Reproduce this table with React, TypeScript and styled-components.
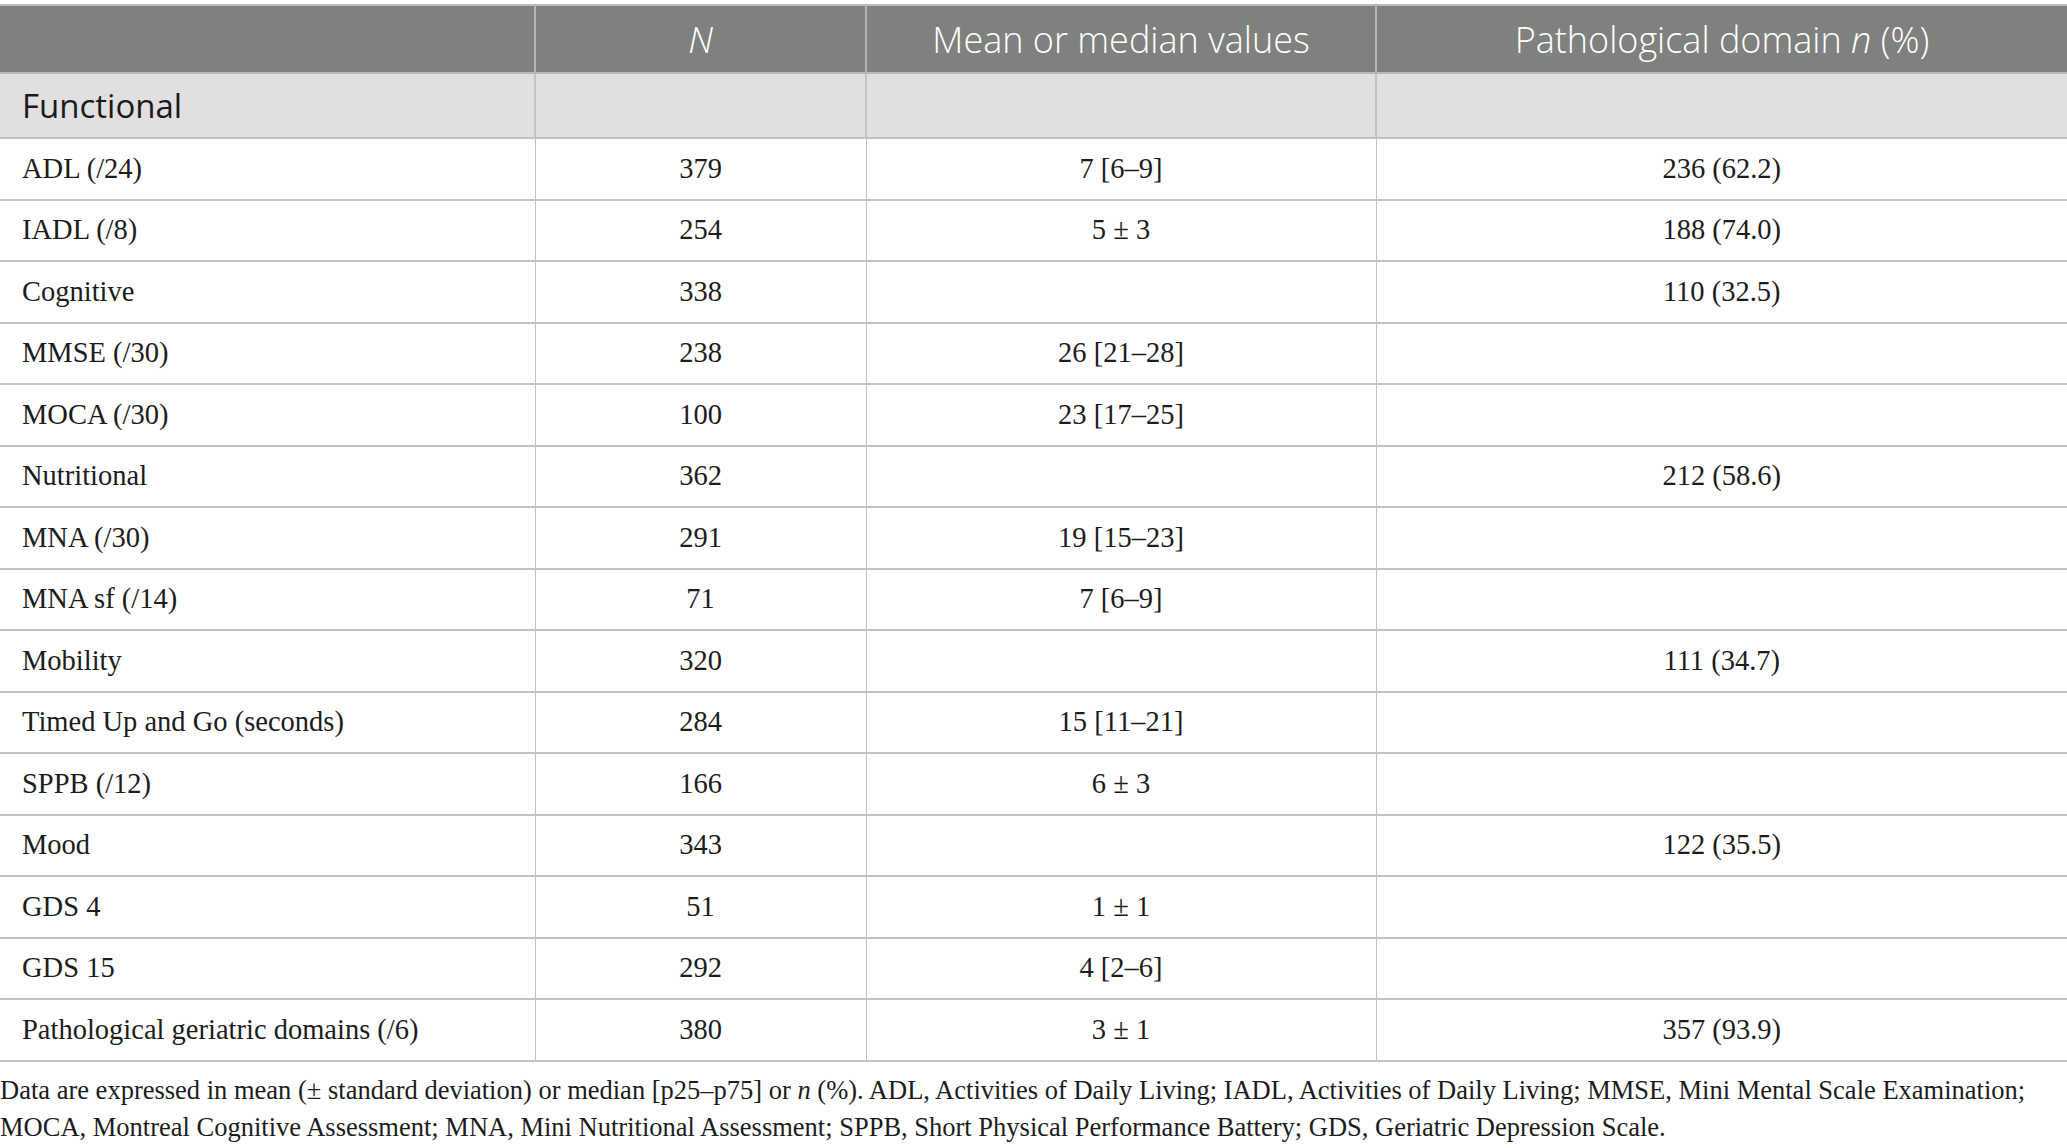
import styled, { createGlobalStyle } from 'styled-components'

type Row = {
  label: string
  n: string
  value?: string
  pathological?: string
}

const rows: Row[] = [
  { label: 'ADL (/24)', n: '379', value: '7 [6–9]', pathological: '236 (62.2)' },
  { label: 'IADL (/8)', n: '254', value: '5 ± 3', pathological: '188 (74.0)' },
  { label: 'Cognitive', n: '338', pathological: '110 (32.5)' },
  { label: 'MMSE (/30)', n: '238', value: '26 [21–28]' },
  { label: 'MOCA (/30)', n: '100', value: '23 [17–25]' },
  { label: 'Nutritional', n: '362', pathological: '212 (58.6)' },
  { label: 'MNA (/30)', n: '291', value: '19 [15–23]' },
  { label: 'MNA sf (/14)', n: '71', value: '7 [6–9]' },
  { label: 'Mobility', n: '320', pathological: '111 (34.7)' },
  { label: 'Timed Up and Go (seconds)', n: '284', value: '15 [11–21]' },
  { label: 'SPPB (/12)', n: '166', value: '6 ± 3' },
  { label: 'Mood', n: '343', pathological: '122 (35.5)' },
  { label: 'GDS 4', n: '51', value: '1 ± 1' },
  { label: 'GDS 15', n: '292', value: '4 [2–6]' },
  { label: 'Pathological geriatric domains (/6)', n: '380', value: '3 ± 1', pathological: '357 (93.9)' },
]

const GlobalStyle = createGlobalStyle`
  html, body {
    margin: 0;
    padding: 0;
    background: #ffffff;
  }
`

export default function App() {
  return (
    <Page>
      <GlobalStyle />
      <Table>
        <colgroup>
          <col style={{ width: 535 }} />
          <col style={{ width: 331 }} />
          <col style={{ width: 510 }} />
          <col />
        </colgroup>
        <thead>
          <tr>
            <HeadCell />
            <HeadCell>
              <i>N</i>
            </HeadCell>
            <HeadCell>Mean or median values</HeadCell>
            <HeadCell>
              Pathological domain <i>n</i> (%)
            </HeadCell>
          </tr>
        </thead>
        <tbody>
          <tr>
            <GroupCell>Functional</GroupCell>
            <GroupCell />
            <GroupCell />
            <GroupCell />
          </tr>
          {rows.map((r) => (
            <tr key={r.label}>
              <Cell $align="left">{r.label}</Cell>
              <Cell>{r.n}</Cell>
              <Cell>{r.value}</Cell>
              <Cell>{r.pathological}</Cell>
            </tr>
          ))}
        </tbody>
      </Table>
      <Footnote>
        Data are expressed in mean (± standard deviation) or median [p25–p75] or <i>n</i> (%). ADL,
        Activities of Daily Living; IADL, Activities of Daily Living; MMSE, Mini Mental Scale
        Examination;
        <br />
        MOCA, Montreal Cognitive Assessment; MNA, Mini Nutritional Assessment; SPPB, Short Physical
        Performance Battery; GDS, Geriatric Depression Scale.
      </Footnote>
    </Page>
  )
}

const Page = styled.div`
  padding-top: 4px;
  width: 2067px;
`

const Table = styled.table`
  width: 100%;
  border-collapse: collapse;
  table-layout: fixed;
  border-top: 2px solid #bdbdbd;
  border-bottom: 2px solid #c4c4c4;
`

const HeadCell = styled.th`
  height: 66px;
  padding: 0 22px;
  background: #7f817f;
  color: #ffffff;
  font-family: 'Open Sans', 'Noto Sans', sans-serif;
  font-weight: 300;
  font-size: 36px;
  text-align: center;
  vertical-align: middle;
  border-left: 2px solid #b4b4b4;

  &:first-child {
    border-left: none;
  }

  i {
    font-style: italic;
  }
`

const GroupCell = styled.td`
  height: 63px;
  padding: 0 22px;
  background: #e1dfe0;
  color: #1a1a1a;
  font-family: 'Open Sans', 'Noto Sans', sans-serif;
  font-size: 33px;
  text-align: left;
  vertical-align: middle;
  border-top: 2px solid #b9b9b9;
  border-left: 2px solid #c4c4c4;

  &:first-child {
    border-left: none;
  }
`

const Cell = styled.td<{ $align?: 'left' | 'center' }>`
  height: 59.5px;
  padding: 0 22px;
  color: #1c1c1c;
  font-family: 'Liberation Serif', 'DejaVu Serif', serif;
  font-size: 28.5px;
  text-align: ${({ $align }) => $align ?? 'center'};
  vertical-align: middle;
  border-top: 2px solid #c2c2c2;
  border-left: 1px solid #c2c2c2;
  white-space: nowrap;

  &:first-child {
    border-left: none;
  }
`

const Footnote = styled.p`
  margin: 10px 0 0;
  color: #1c1c1c;
  font-family: 'Liberation Serif', 'DejaVu Serif', serif;
  font-size: 26.5px;
  line-height: 37px;
  white-space: nowrap;
`
